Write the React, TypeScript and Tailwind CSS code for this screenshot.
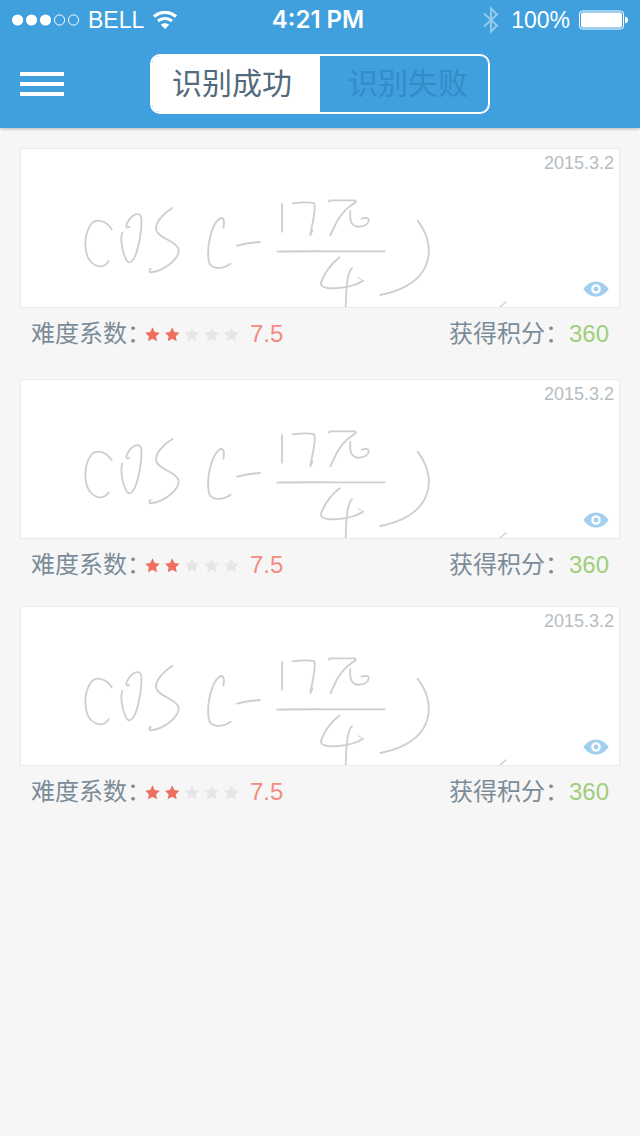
import React, { useState } from "react";

const records = [
  { id: 1, date: "2015.3.2", stars: 2, difficulty: "7.5", points: 360 },
  { id: 2, date: "2015.3.2", stars: 2, difficulty: "7.5", points: 360 },
  { id: 3, date: "2015.3.2", stars: 2, difficulty: "7.5", points: 360 },
];

const tabs = [
  { label: "识别成功", spacing: "pr-2" },
  { label: "识别失败", spacing: "pl-2" },
];

function SignalDots() {
  return (
    <svg width="68" height="12" viewBox="0 0 68 12" aria-hidden="true">
      <circle cx="5.6" cy="6" r="5.6" fill="#fff" />
      <circle cx="19.5" cy="6" r="5.6" fill="#fff" />
      <circle cx="33.5" cy="6" r="5.6" fill="#fff" />
      <circle cx="47.5" cy="6" r="5.1" fill="none" stroke="#fff" />
      <circle cx="61.5" cy="6" r="5.1" fill="none" stroke="#fff" />
    </svg>
  );
}

function WifiIcon() {
  return (
    <svg width="24" height="18" viewBox="0 0 24 18" fill="none" aria-hidden="true">
      <path d="M1 5.600C7.300-.1 16.700-.1 23 5.600" stroke="#fff" strokeWidth="3.200" />
      <path d="M5 10c4-3.500 10-3.500 14 0" stroke="#fff" strokeWidth="3" />
      <path d="M12 18l-4.200-4.200c2.400-2 6-2 8.400 0z" fill="#fff" />
    </svg>
  );
}

function BluetoothIcon() {
  return (
    <svg width="16" height="28" viewBox="0 0 16 28" fill="none" aria-hidden="true">
      <path d="M1 7.500l13 12-6 6V2.500l6 6L1 20.500" stroke="#94c9ee" strokeWidth="2" />
    </svg>
  );
}

function BatteryIcon() {
  return (
    <svg width="50" height="20" viewBox="0 0 50 20" aria-hidden="true">
      <rect x="1.500" y="1" width="44" height="18" rx="3" fill="none" stroke="#fff" />
      <rect x="3" y="2.500" width="41" height="15" rx="2" fill="#fff" />
      <path d="M47 6.500c2 .5 3 1.900 3 3.500s-1 3-3 3.500z" fill="#fff" />
    </svg>
  );
}

function EyeIcon() {
  return (
    <svg width="26" height="16" viewBox="0 0 26 16" aria-hidden="true">
      <path d="M.3 8C3.500 3.500 8 .4 13 .4S22.500 3.500 25.700 8C22.500 12.500 18 15.600 13 15.600S3.500 12.500.3 8z" fill="#a1cfef" />
      <circle cx="13" cy="8" r="3.600" fill="#a1cfef" stroke="#fff" strokeWidth="2.400" />
    </svg>
  );
}

function Stars({ value }: { value: number }) {
  return (
    <svg width="94" height="15" viewBox="0 0 94 15" role="img" aria-label={value + " / 5"}>
      {[0, 1, 2, 3, 4].map((i) => (
        <path
          key={i}
          transform={"translate(" + i * 19.7 + " 0)"}
          d="M7.500 .3l2.200 4.700 5.100.7-3.700 3.500.9 5.100-4.500-2.500-4.500 2.500.9-5.100L.2 5.700l5.100-.7z"
          fill={i < value ? "#ee6e60" : "#e6e6e6"}
        />
      ))}
    </svg>
  );
}

function Handwriting() {
  return (
    <svg
      className="block h-[158px] w-full"
      viewBox="21 149 598 158"
      preserveAspectRatio="xMinYMin meet"
      fill="none"
      stroke="#cecece"
      strokeWidth="5.500"
      strokeLinecap="round"
      strokeLinejoin="round"
      aria-hidden="true"
    >
      <g transform="translate(70 190) scale(.33333)">
        <path d="M125 118C110 93 78 82 62 104C38 140 43 196 64 217C85 235 105 232 116 214" />
        <path d="M178 111C165 117 168 104 175 93C187 72 210 64 214 83C217 120 204 187 190 208C180 223 172 219 165 201C155 178 151 143 157 128" />
        <path d="M307 54C280 70 256 98 258 118C262 145 319 151 326 178C329 205 284 243 240 247C237 243 239 239 242 236" />
        <path d="M460 113C465 89 459 78 447 87C426 103 409 165 416 212C420 239 456 239 482 221" />
        <path d="M501 167C524 161 547 157 570 156" />
      </g>
      <g transform="translate(260 190) scale(.33333)">
        <path d="M66 42L66 125" />
        <path d="M97 40C120 37 150 36 163 40C169 62 157 98 151 135L157 122" />
        <path d="M207 35C206 31 212 31 220 31L282 31C290 31 289 36 282 40C256 57 233 85 222 113L211 136L216 125" />
        <path d="M271 63C270 78 269 90 275 99C281 108 290 111 300 110C315 108 327 100 326 88C324 82 314 83 305 86" />
        <path d="M52 185C130 182 260 185 374 184" />
        <path d="M239 202C217 219 195 247 184 275C180 287 189 292 203 294C240 298 284 288 309 272" />
        <path d="M294 263L309 272" strokeWidth="3" />
        <path d="M276 235C265 243 262 270 260 290C258 310 258 330 257 352" />
        <path d="M473 92C511 142 517 197 489 243C461 286 407 306 361 315" />
      </g>
      <path d="M500 307L506 302" strokeWidth="1.400" />
    </svg>
  );
}

export default function App() {
  const [tab, setTab] = useState(0);
  return (
    <div className="min-h-screen bg-[#f6f6f6] font-['Liberation_Sans','Noto_Sans_CJK_SC',sans-serif]">
      <header className="bg-[#409fdd] shadow-[0_1px_3px_rgba(0,0,0,0.25)]">
        <div className="grid h-10 grid-cols-[1fr_auto_1fr] items-center px-3 text-[23px] leading-10 text-white">
          <div className="flex items-center">
            <SignalDots />
            <span className="mr-[9px] ml-2">BELL</span>
            <WifiIcon />
          </div>
          <time className="pr-1 font-['Inter',sans-serif] text-[24px] font-semibold">4:21 PM</time>
          <div className="flex items-center justify-end">
            <BluetoothIcon />
            <span className="mr-2 ml-3">100%</span>
            <BatteryIcon />
          </div>
        </div>
        <nav className="grid h-[88px] grid-cols-[1fr_auto_1fr] items-center px-5">
          <button type="button" aria-label="菜单" className="flex w-11 flex-col gap-1.5">
            <span className="h-1 w-full bg-white" />
            <span className="h-1 w-full bg-white" />
            <span className="h-1 w-full bg-white" />
          </button>
          <div className="grid h-[60px] w-[340px] grid-cols-2 overflow-hidden rounded-[10px] border-2 border-white text-[30px] leading-[56px]">
            {tabs.map(({ label, spacing }, i) => (
              <button
                key={label}
                type="button"
                aria-pressed={tab === i}
                onClick={() => setTab(i)}
                className={
                  "text-center " + spacing + (tab === i ? " bg-white text-[#526a7b]" : " text-[#358bc6]")
                }
              >
                {label}
              </button>
            ))}
          </div>
        </nav>
      </header>

      <main className="px-5 pt-5">
        <ul>
          {records.map((r) => (
            <li key={r.id} className="mb-[15px] first:mb-[19px]">
              <div className="relative border border-[#ebebeb] bg-white">
                <Handwriting />
                <time className="absolute top-1 right-[5px] text-[18px] leading-5 text-[#b5bdc3]">{r.date}</time>
                <button type="button" aria-label="查看" className="absolute right-[10px] bottom-[10px]">
                  <EyeIcon />
                </button>
              </div>
              <div className="flex h-[52px] items-center justify-between px-[11px] text-[24px] leading-[52px] text-[#7b8c98]">
                <div className="flex items-center">
                  <span>难度系数：</span>
                  <span className="-ml-1.5">
                    <Stars value={r.stars} />
                  </span>
                  <span className="ml-[11px] text-[#f38b80]">{r.difficulty}</span>
                </div>
                <div className="flex items-center">
                  <span>获得积分：</span>
                  <span className="text-[#9fce7c]">{r.points}</span>
                </div>
              </div>
            </li>
          ))}
        </ul>
      </main>
    </div>
  );
}
